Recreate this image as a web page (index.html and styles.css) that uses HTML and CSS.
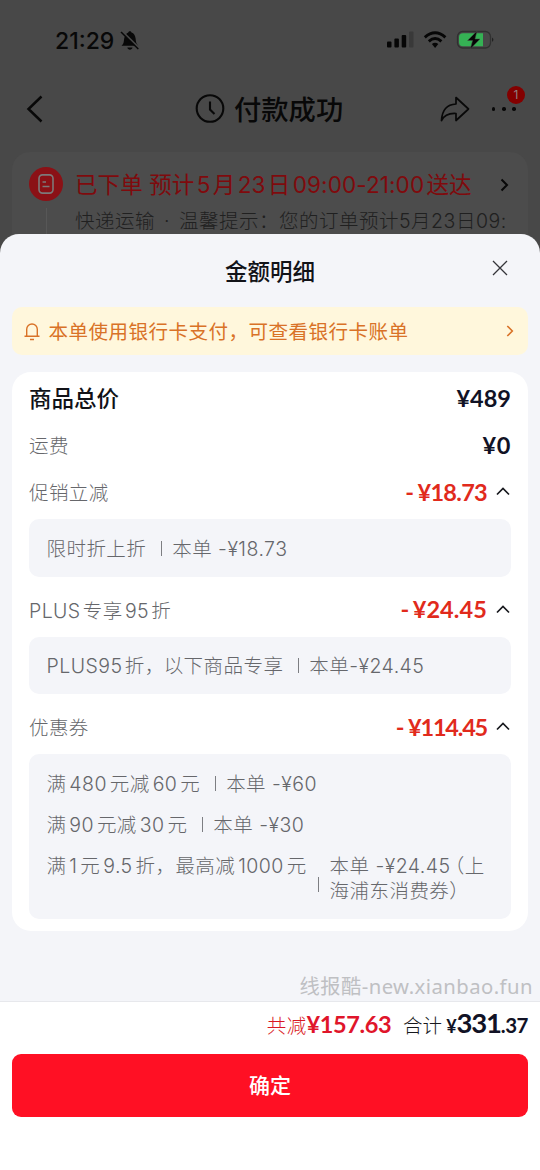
FILE: index.html
```html
<!DOCTYPE html>
<html lang="zh-CN">
<head>
<meta charset="utf-8">
<title>金额明细</title>
<link rel="stylesheet" href="styles.css">
</head>
<body>
<div class="phone">
  <div class="page">
    <div class="status">
      <span class="time">21:29</span>
      <svg class="mute" width="20" height="21" viewBox="0 0 20 21"><path d="M1.500 15.800c2.400-2 2.200-3.800 2.700-7.200C4.700 5 6.500 3 8.300 2.500c.4-1.700 2.800-1.700 3.200 0 2.500.7 3.800 3 4.100 6.100.3 3.600.6 5.200 2.600 7.200z" fill="#080808"/><path d="M7.300 17.600h5.200c-.5 2.800-4.700 2.800-5.200 0z" fill="#080808"/><path d="M2 1.300 19.500 18.500" stroke="#484848" stroke-width="2"/><path d="M1 2 18.300 19" stroke="#080808" stroke-width="1.500"/></svg>
      <span class="spring"></span>
      <svg class="sysicons" width="112" height="22" viewBox="0 0 112 22">
        <g fill="#060606"><rect x="1" y="12.500" width="4.500" height="6" rx="1"/><rect x="8.400" y="9.500" width="4.500" height="9" rx="1"/><rect x="15.700" y="6" width="4.500" height="12.500" rx="1"/></g>
        <rect x="23" y="2.500" width="4.500" height="16" rx="1" fill="#393939"/>
        <g fill="none" stroke="#060606" stroke-width="2.900"><path d="M38.800 8.300q10.300-9 20.600 0"/><path d="M42.800 12.300q6.300-5.400 12.600 0"/></g>
        <path d="M45.900 15.100q3.200-2.500 6.400 0l-3.200 3.800z" fill="#060606"/>
        <rect x="71.500" y="2.500" width="33" height="16.500" rx="5.200" fill="#484848" stroke="#303030" stroke-width="1.300"/>
        <path d="M77 4.300h20v13H77a4 4 0 0 1-4-4V8a4 4 0 0 1 4-3.700z" fill="#35b154"/>
        <path d="M106.300 8.500q2 2.200 0 4.500z" fill="#101010"/>
        <path d="m91 2-9.400 9.500h5L84.300 20l9.700-10h-5z" fill="#060606" stroke="#484848" stroke-width=".5"/>
      </svg>
    </div>
    <div class="nav">
      <svg class="back" width="18" height="30" viewBox="0 0 18 30"><path d="M15.500 2.500 2.500 15l13 12.500" fill="none" stroke="#080808" stroke-width="2.500"/></svg>
      <div class="navtitle">
        <svg width="30" height="30" viewBox="0 0 30 30"><g fill="none" stroke="#080808" stroke-width="2.100"><circle cx="15" cy="14.500" r="13.300"/><path d="M15 7.500v8l4.500 4.500"/></g></svg>
        <span>付款成功</span>
      </div>
      <svg class="share" width="32" height="28" viewBox="0 0 32 28"><path d="M17 2.500 29.500 14 17 25.500v-7C9.500 18 5 20.500 2.500 25.500 3 16 7.500 9.500 17 9z" fill="none" stroke="#080808" stroke-width="1.700" stroke-linejoin="round"/></svg>
      <div class="more"><i></i><i></i><i></i><b>1</b></div>
    </div>
    <div class="order">
      <div class="rail">
        <svg width="34" height="34" viewBox="0 0 34 34"><circle cx="17" cy="17" r="17" fill="#8b1116"/><rect x="10" y="7.900" width="14" height="18.200" rx="3.500" fill="none" stroke="#7d7979" stroke-width="1.600"/><path d="M13.500 15h3.500M13.500 19.500h7" stroke="#7d7979" stroke-width="1.700"/></svg>
        <i></i>
      </div>
      <div class="orderbody">
        <div class="ordertop"><span class="eta">已下单 预计<span class="g">5</span>月<span class="g">23</span>日<span class="g">09:00-21:00</span>送达</span><svg width="9" height="14" viewBox="0 0 9 14"><path d="m1.500 1.500 5.500 5.500-5.500 5.500" fill="none" stroke="#080808" stroke-width="2"/></svg></div>
        <div class="tip">快递运输<span class="dot">·</span>温馨提示：您的订单预计5月23日09:</div>
      </div>
    </div>
  </div>

  <div class="sheet">
    <div class="sheethead"><span>金额明细</span><svg class="close" width="16" height="16" viewBox="0 0 16 16"><path d="m1 1 14 14M15 1 1 15" stroke="#34353a" stroke-width="1.300"/></svg></div>
    <div class="notice">
      <svg width="16" height="19" viewBox="0 0 16 19"><path d="M2.700 14V7.300a5.300 5.300 0 0 1 10.600 0V14M.5 14.300h15M6 17.500h4" fill="none" stroke="#d97227" stroke-width="1.400"/></svg>
      <span>本单使用银行卡支付，可查看银行卡账单</span>
      <svg class="go" width="8" height="12" viewBox="0 0 8 12"><path d="m1.300 1 5 5-5 5" fill="none" stroke="#d97227" stroke-width="1.600"/></svg>
    </div>

    <div class="card">
      <div class="row total"><span class="label">商品总价</span><span class="price">¥489</span></div>
      <div class="row"><span class="label">运费</span><span class="price zero">¥0</span></div>
      <div class="row"><span class="label">促销立减</span><span class="price off"><em>-</em><span class="p1">¥18.73</span></span><svg class="up" width="14" height="9" viewBox="0 0 14 9"><path d="m1 7.500 6-6 6 6" fill="none" stroke="#17181d" stroke-width="1.700"/></svg></div>
      <div class="box"><div class="item"><span>限时折上折</span><i></i><span>本单 -¥18.73</span></div></div>
      <div class="row"><span class="label">PLUS<span class="cj">专享</span>95<span class="cj">折</span></span><span class="price off"><em>-</em><span class="p2">¥24.45</span></span><svg class="up" width="14" height="9" viewBox="0 0 14 9"><path d="m1 7.500 6-6 6 6" fill="none" stroke="#17181d" stroke-width="1.700"/></svg></div>
      <div class="box"><div class="item"><span>PLUS95<span class="cj first">折，</span>以下商品专享</span><i></i><span>本单-¥24.45</span></div></div>
      <div class="row"><span class="label">优惠券</span><span class="price off"><em>-</em><span class="p3">¥114.45</span></span><svg class="up" width="14" height="9" viewBox="0 0 14 9"><path d="m1 7.500 6-6 6 6" fill="none" stroke="#17181d" stroke-width="1.700"/></svg></div>
      <div class="box">
        <div class="item"><span>满<span class="g">480</span>元减<span class="g">60</span>元</span><i></i><span>本单 -¥60</span></div>
        <div class="item"><span>满<span class="g">90</span>元减<span class="g">30</span>元</span><i></i><span>本单 -¥30</span></div>
        <div class="item long"><span>满<span class="g">1</span>元<span class="g">9.5</span>折，最高减<span class="g">1000</span>元</span><i></i><span>本单 -¥24.45<span class="paren">（</span>上<br>海浦东消费券）</span></div>
      </div>
    </div>

    <div class="gap"><span class="mark">线报酷-new.xianbao.fun</span></div>
    <div class="footer">
      <div class="sum"><span class="saved">共减</span><span class="price off saveamt">¥157.63</span><span class="sumlabel">合计</span><span class="price yen">¥</span><span class="price big">331</span><span class="price cents">.37</span></div>
      <div class="ok">确定</div>
    </div>
  </div>
</div>
</body>
</html>
```

FILE: styles.css
```css
* { box-sizing: border-box; }
body { margin: 0; font-family: Inter, "Noto Sans CJK SC", sans-serif; text-autospace: no-autospace; }
svg { display: block; flex: none; }
i, em { font-style: normal; }
span { white-space: nowrap; }
.phone { position: relative; width: 540px; height: 1170px; overflow: hidden; background: #484848; }
.page { height: 260px; color: #080808; }

.status { display: flex; align-items: center; height: 80px; padding: 0 42px 0 55px; }
.time { font-size: 23px; font-weight: 500; width: 65px; padding-top: 1px; }
.spring { flex: 1; }
.nav { display: flex; align-items: center; height: 58px; padding: 0 22px 0 26px; }
.navtitle { display: flex; align-items: center; gap: 9px; margin-left: 151px; flex: 1; font-size: 27.300px; font-weight: 500; }
.navtitle span { line-height: 40px; padding-top: 3px; }
.more { position: relative; display: flex; gap: 6.800px; margin-left: 21px; width: 26px; }
.more i { width: 3.400px; height: 3.400px; border-radius: 50%; background: #080808; }
.more b { position: absolute; left: 15px; top: -21px; width: 18px; height: 18px; border-radius: 50%; background: #830000; color: #8f8080; font: 400 12px/18px Inter, sans-serif; text-align: center; }

.order { display: flex; margin: 14px 12px 0; height: 120px; border-radius: 18px; background: #4c4c4c; padding: 15px 17px 0; }
.rail { width: 34px; display: flex; flex-direction: column; align-items: center; }
.rail i { width: 1px; flex: 1; margin-top: 7px; background: #575757; }
.orderbody { flex: 1; margin-left: 12px; }
.ordertop { display: flex; align-items: center; justify-content: space-between; height: 35px; padding-right: 2px; color: #7f0a0d; font-size: 22.500px; line-height: 35px; }
.eta { letter-spacing: .1px; }
.eta .g { margin: 0 2.300px; }
.tip { font-size: 19.500px; line-height: 34px; height: 34px; letter-spacing: .5px; color: #202020; white-space: nowrap; font-weight: 300; margin-top: 2px; }
.dot { margin: 0 9px; }
.g { margin: 0 2.900px; }

.sheet { position: absolute; left: 0; top: 234px; width: 540px; height: 936px; border-radius: 19px 19px 0 0; background: #f4f5f9; overflow: hidden; display: flex; flex-direction: column; }
.sheethead { display: flex; justify-content: center; align-items: center; height: 73px; padding-bottom: 2px; font-size: 22.500px; font-weight: 500; color: #121318; position: relative; }
.close { position: absolute; left: 492px; top: 26px; }
.notice { display: flex; align-items: center; height: 48px; margin: 0 12px; padding: 0 14px 0 12px; border-radius: 10px; background: #fff7dc; color: #d97227; font-size: 19.500px; letter-spacing: .5px; }
.notice span { margin-left: 8.500px; flex: 1; padding-bottom: 2px; }
.card { margin: 17px 12px 0; height: 559px; padding: 2px 17px 0; border-radius: 19px; background: #fff; }
.row { display: flex; align-items: center; height: 47px; color: #66676b; }
.label { flex: 1; font-size: 19.500px; font-weight: 300; letter-spacing: .4px; }
.total .label { color: #111217; font-size: 22.500px; font-weight: 500; letter-spacing: 0; padding-bottom: 2px; }
.price { font-family: Lato, sans-serif; font-size: 23.500px; font-weight: 700; color: #111225; line-height: 30px; }
.total .price { padding-top: 1px; }
.zero { letter-spacing: .6px; }
.off { color: #e12a1c; }
.off em { margin-right: 3.500px; }
.p1 { letter-spacing: -.7px; }
.p2 { letter-spacing: .1px; }
.p3 { letter-spacing: -1.200px; }
.up { margin-left: 9px; margin-right: 1px; }
.box { margin: 4px 0 9px; padding: 17.500px 18px 15px 17.500px; border-radius: 10px; background: #f4f5f9; color: #66676b; display: flex; flex-direction: column; gap: 16.200px; }
.item { display: flex; align-items: center; font-size: 19.500px; line-height: 25px; letter-spacing: .45px; font-weight: 300; }
.item i { flex: none; width: 1px; height: 15px; margin: 0 10px 0 15px; background: #7d7e82; position: relative; top: -1px; }
.long { align-items: flex-start; }
.long i { margin: 13px 11px 0 11px; align-self: center; }
.paren { font-feature-settings: "halt"; margin-left: 4px; }
.cj { margin: 0 2.300px; }
.first { margin-right: -1px; }

.gap { flex: 1; display: flex; justify-content: flex-end; align-items: flex-end; padding: 0 7px 1px 0; }
.mark { font-family: "Noto Sans", "Noto Sans CJK SC", sans-serif; font-size: 20.300px; line-height: 28px; color: #bfc0c3; letter-spacing: .45px; }
.footer { height: 169px; border-top: 1px solid #e7e8ec; background: #fff; padding: 0 12px; }
.sum { display: flex; height: 51px; align-items: baseline; justify-content: flex-end; padding-top: 6px; font-size: 19.500px; font-weight: 300; }
.saved { color: #d91823; letter-spacing: .4px; }
.saveamt { letter-spacing: -.4px; color: #e0152a; }
.sumlabel { color: #17181d; margin: 0 4px 0 12px; }
.yen { font-size: 18px; }
.big { font-size: 27.500px; letter-spacing: -1.200px; }
.cents { font-size: 20.500px; letter-spacing: -.5px; }
.ok { height: 63px; margin-top: 1px; border-radius: 9px; background: #ff1024; color: #fff; text-align: center; font-size: 21px; font-weight: 500; line-height: 63px; }
```
